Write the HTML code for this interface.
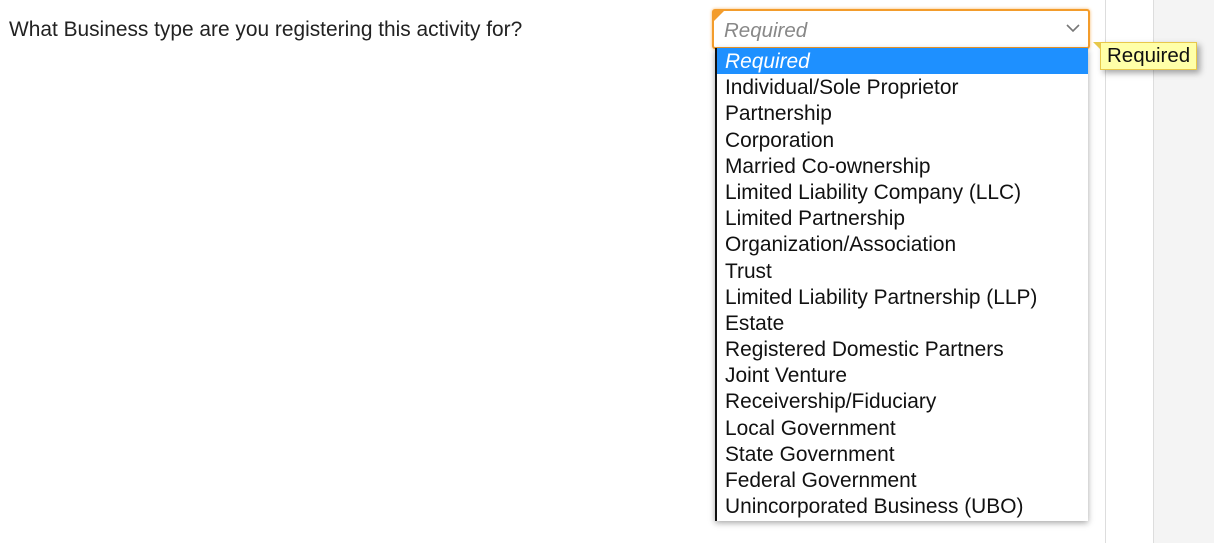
<!DOCTYPE html>
<html><head><meta charset="utf-8"><style>
body{margin:0;width:1214px;height:543px;background:#fff;position:relative;overflow:hidden;font-family:"Liberation Sans",Arial,sans-serif;}
.q{position:absolute;left:9px;top:18px;font-size:20.9px;color:#222;}
.vl1{position:absolute;left:1105px;top:0;width:1px;height:543px;background:#ddd;}
.gray{position:absolute;left:1153px;top:0;width:61px;height:543px;background:#f4f4f4;border-left:1px solid #ddd;}
.sel{position:absolute;left:712px;top:9px;width:374px;height:36px;border:2px solid #f39c2b;border-radius:3px;background:#fff;box-shadow:0 0 3px #f9b96a;}
.sel .ph{position:absolute;left:10px;top:8px;font-size:20.5px;font-style:italic;color:#888;}
.sel .tri{position:absolute;left:0;top:0;width:0;height:0;border-top:10px solid #f39c2b;border-right:10px solid transparent;}
.sel svg{position:absolute;right:8px;top:13px;}
.dd{position:absolute;left:715px;top:48px;width:371px;height:473px;background:#fff;border-left:2px solid #111;box-shadow:0 2px 6px rgba(0,0,0,.35);}
.dd div{height:26.2px;line-height:28px;padding-left:8px;font-size:20.9px;color:#111;}
.dd .hl{background:#1e90ff;color:#fff;font-style:italic;}
.tip{position:absolute;left:1100px;top:42px;height:26px;line-height:26px;padding:0 6px;background:#ffffa8;border:1px solid #e8c84a;font-size:20.5px;color:#111;box-shadow:3px 3px 6px rgba(0,0,0,.35);}
.tip:before{content:"";position:absolute;left:-8px;top:-1px;border-top:8px solid #e8c84a;border-left:8px solid transparent;}
</style></head><body>
<div class="q">What Business type are you registering this activity for?</div>
<div class="vl1"></div><div class="gray"></div>
<div class="sel"><div class="tri"></div><div class="ph">Required</div>
<svg width="14" height="9" viewBox="0 0 14 9"><path d="M1 1 L7 7 L13 1" fill="none" stroke="#777" stroke-width="1.6"/></svg></div>
<div class="dd">
<div class="hl">Required</div>
<div>Individual/Sole Proprietor</div>
<div>Partnership</div>
<div>Corporation</div>
<div>Married Co-ownership</div>
<div>Limited Liability Company (LLC)</div>
<div>Limited Partnership</div>
<div>Organization/Association</div>
<div>Trust</div>
<div>Limited Liability Partnership (LLP)</div>
<div>Estate</div>
<div>Registered Domestic Partners</div>
<div>Joint Venture</div>
<div>Receivership/Fiduciary</div>
<div>Local Government</div>
<div>State Government</div>
<div>Federal Government</div>
<div>Unincorporated Business (UBO)</div>
</div>
<div class="tip">Required</div>
</body></html>
